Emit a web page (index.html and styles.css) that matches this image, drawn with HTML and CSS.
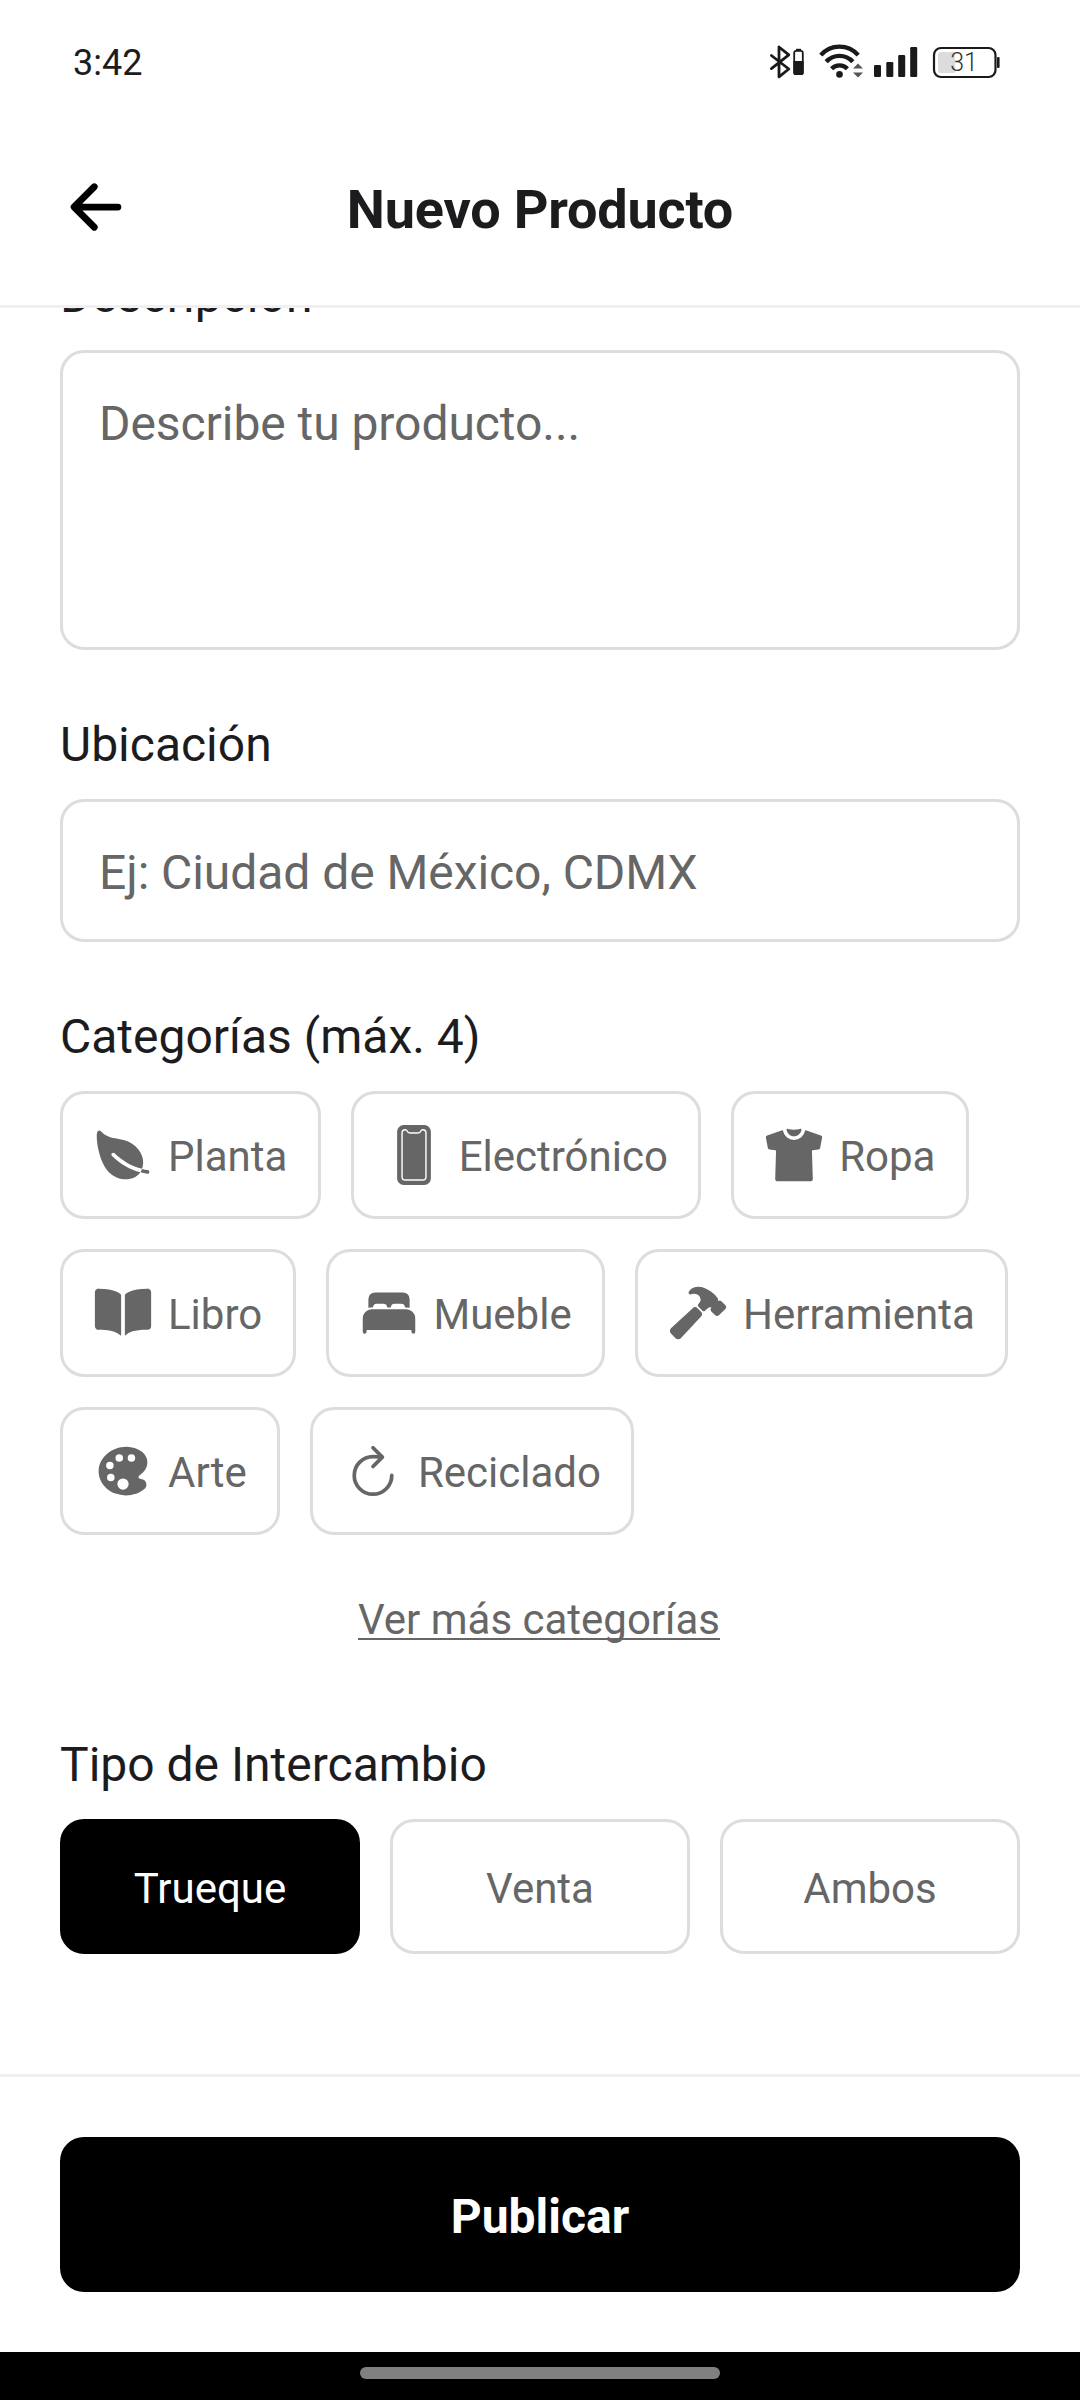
FILE: index.html
```html
<!DOCTYPE html>
<html lang="es">
<head>
<meta charset="utf-8">
<title>Nuevo Producto</title>
<link rel="stylesheet" href="styles.css">
</head>
<body>
<div class="screen">
  <div class="statusbar">
    <span class="clock">3:42</span>
    <svg class="status-icons" viewBox="0 0 300 70" width="300" height="70">
      <g fill="none" stroke="#1a1a1a" stroke-width="2.8" stroke-linejoin="round" stroke-linecap="round">
        <path d="M31.4 25.5L48.8 39L39 46.8V17L48.8 24.8L31.4 38.6"/>
      </g>
      <rect x="54.2" y="20.8" width="8.6" height="23.4" rx="2" fill="none" stroke="#1a1a1a" stroke-width="1.8"/>
      <rect x="56" y="18.8" width="5" height="2" fill="#1a1a1a"/>
      <path d="M53.4 31h10.2v12a2 2 0 0 1-2 2h-6.2a2 2 0 0 1-2-2z" fill="#1a1a1a"/>
      <g fill="none" stroke="#1a1a1a" stroke-width="4.3">
        <path d="M80.8 25.2a24.7 24.7 0 0 1 37.4 0"/>
        <path d="M86.2 31.8a17.8 17.8 0 0 1 26.6 0"/>
        <path d="M91.6 38.7a11 11 0 0 1 15.8 0"/>
      </g>
      <circle cx="99.5" cy="44.4" r="3.3" fill="#1a1a1a"/>
      <path d="M113 38.6l5-5 5 5zM113 42.4l5 5.2 5-5.2z" fill="#555"/>
      <g fill="#1a1a1a">
        <rect x="134" y="35" width="7" height="12" rx="1.2"/>
        <rect x="146.3" y="32" width="7" height="15" rx="1.2"/>
        <rect x="158.2" y="25" width="7" height="22" rx="1.2"/>
        <rect x="170.2" y="17" width="7" height="30" rx="1.2"/>
        <rect x="257" y="27" width="2.6" height="11" rx="1"/>
      </g>
      <path d="M201 22h14v21h-14a3 3 0 0 1-3-3V25a3 3 0 0 1 3-3z" fill="#dcdcdc"/>
      <rect x="194" y="18" width="61.5" height="29" rx="7" fill="none" stroke="#1a1a1a" stroke-width="2.2"/>
      <text class="battery-level" x="224" y="41" text-anchor="middle">31</text>
    </svg>
  </div>

  <header class="header">
    <svg class="back" viewBox="0 0 512 512" fill="none" stroke="#000" stroke-width="48" stroke-linecap="round" stroke-linejoin="round"><path d="M244 400L100 256l144-144M120 256h292"/></svg>
    <h1 class="title">Nuevo Producto</h1>
  </header>

  <main class="content">
    <div class="form">
      <section class="field">
        <div class="label">Descripción</div>
        <div class="input input-area">Describe tu producto...</div>
      </section>
      <section class="field">
        <div class="label">Ubicación</div>
        <div class="input">Ej: Ciudad de México, CDMX</div>
      </section>
      <section class="field">
        <div class="label">Categorías (máx. 4)</div>
        <div class="chips">
          <div class="chip"><svg class="icon" viewBox="0 0 512 512"><path d="M161.35 242a16 16 0 0122.62-.68c73.63 69.36 147.51 111.56 234.45 133.07 11.73-32 12.77-67.22 2.64-101.58-13.44-45.59-44.74-85.31-90.49-114.86-40.84-26.38-81.66-33.25-121.15-39.89-49.82-8.38-96.88-16.3-141.79-63.85-5-5.26-11.81-7.37-18.32-5.66-7.44 2-12.43 7.88-14.82 17.6-5.6 22.75-2 86.51 13.75 153.82 25.29 108.14 65.65 162.86 95.06 189.73 38 34.69 87.62 53.9 136.93 53.9a186 186 0 0027.77-2.04c41.71-6.32 76.43-27.27 96-57.75-89.49-23.28-165.94-67.55-242-139.16a16 16 0 01-.65-22.65zM467.43 384.19c-16.83-2.59-33.13-5.84-49-9.77a157.71 157.71 0 01-12.13 25.68c-.73 1.25-1.5 2.49-2.29 3.71a584.21 584.21 0 0058.56 12 16 16 0 104.87-31.62z"/></svg><span>Planta</span></div>
          <div class="chip"><svg class="icon" viewBox="0 0 512 512"><rect x="112" width="288" height="512" rx="56"/><path class="screen-line" d="M180 41q-26 0-26 28v372q0 28 28 28h148q28 0 28-28V69q0-28-26-28-14 0-17 9-6 18-26 18h-66q-20 0-26-18-3-9-17-9z"/></svg><span>Electrónico</span></div>
          <div class="chip"><svg class="icon" viewBox="0 0 512 512"><path d="M256 96c33.08 0 60.71-25.78 64-58 .3-3-3-6-6-6a13 13 0 00-4.74.9c-.2.08-21.1 8.1-53.26 8.1s-53.1-8-53.26-8.1a16.21 16.21 0 00-5.3-.9h-.06a5.69 5.69 0 00-5.38 6c3.35 32.16 31 58 64 58z"/><path d="M485.29 89.9L356 44.64a4 4 0 00-5.27 3.16 96 96 0 01-189.38 0 4 4 0 00-5.27-3.16L26.71 89.9A16 16 0 0016.28 108l16.63 88A16 16 0 0046.83 208.9l48.88 5.52a8 8 0 017.1 8.19l-7.33 240.9a16 16 0 009.1 14.94A17.49 17.49 0 00112 480h288a17.49 17.49 0 007.42-1.55 16 16 0 009.1-14.94l-7.33-240.9a8 8 0 017.1-8.19l48.88-5.52a16 16 0 0013.92-12.9l16.63-88a16 16 0 00-10.43-18.1z"/></svg><span>Ropa</span></div>
          <div class="chip"><svg class="icon" viewBox="0 0 512 512"><path d="M202.24 74C166.11 56.75 115.61 48.3 48 48a31.36 31.36 0 00-17.92 5.33A32 32 0 0016 79.9V366c0 19.34 13.76 33.93 32 33.93 71.07 0 142.36 6.64 185.06 47a4.11 4.11 0 006.94-3V106.82a15.89 15.89 0 00-5.46-12A143 143 0 00202.24 74zM481.92 53.3A31.33 31.33 0 00464 48c-67.61.3-118.11 8.71-154.24 26a143.31 143.31 0 00-32.31 20.78 15.93 15.93 0 00-5.45 12v337.13a3.93 3.93 0 006.68 2.81c25.67-25.5 70.72-46.82 185.36-46.81a32 32 0 0032-32v-288a32 32 0 00-14.12-26.61z"/></svg><span>Libro</span></div>
          <div class="chip"><svg class="icon" viewBox="0 0 512 512"><path d="M432 230.7a79.44 79.44 0 00-32-6.7H112a79.51 79.51 0 00-32 6.69A80.09 80.09 0 0032 304v112a16 16 0 0032 0v-8a8.1 8.1 0 018-8h368a8.1 8.1 0 018 8v8a16 16 0 0032 0V304a80.09 80.09 0 00-48-73.3zM376 80H136a56 56 0 00-56 56v72a4 4 0 005.11 3.84A95.5 95.5 0 01112 208h4.23a4 4 0 004-3.55A32 32 0 01152 176h56a32 32 0 0131.8 28.45 4 4 0 004 3.55h24.46a4 4 0 004-3.55A32 32 0 01304 176h56a32 32 0 0131.8 28.45 4 4 0 004 3.55H400a95.51 95.51 0 0126.89 3.85A4 4 0 00432 208v-72a56 56 0 00-56-56z"/></svg><span>Mueble</span></div>
          <div class="chip"><svg class="icon" viewBox="0 0 512 512"><path d="M280.16 242.79l-26.11-26.12a32 32 0 00-45.14-.12L27.38 384.08c-6.61 6.23-10.95 14.17-11.35 23.06a32.11 32.11 0 009.21 23.94l39 39.43a.46.46 0 00.07.07A32.29 32.29 0 0087 480h1.18c8.89-.33 17-4.64 23.32-11.26l168.68-180.69a32 32 0 00-.02-45.26zM490 190l-.31-.31-34.27-33.92a21.46 21.46 0 00-15.28-6.26 21.89 21.89 0 00-12.79 4.14c0-.43.06-.85.09-1.22.45-6.5 1.15-16.32-5.2-25.22a258 258 0 00-24.8-28.74.6.6 0 00-.08-.08c-13.32-13.12-42.31-37.83-86.72-55.94A139.55 139.55 0 00257.56 32C226 32 202 46.24 192.81 54.68a119.92 119.92 0 00-14.18 17.22 16 16 0 0018.65 24.34 74.45 74.45 0 018.58-2.63 63.46 63.46 0 0118.45-1.15c13.19 1.09 28.79 7.64 35.69 13.09 11.7 9.41 17.33 22.09 18.26 41.09.18 3.82-7.72 18.14-20 34.48a16 16 0 001.45 21l34.41 34.41a16 16 0 0022 .62c9.73-8.69 24.55-21.79 29.73-25 7.69-4.73 13.19-5.64 14.7-5.8a19.18 19.18 0 0111.29 2.38 1.24 1.24 0 01-.31.95l-1.82 1.73-.3.28a21.52 21.52 0 00.05 30.54l34.26 33.91a21.45 21.45 0 0015.28 6.25 21.7 21.7 0 0015.22-6.2l55.5-54.82c.19-.19.38-.39.56-.59A21.87 21.87 0 00490 190z"/></svg><span>Herramienta</span></div>
          <div class="chip"><svg class="icon" viewBox="0 0 512 512"><path d="M441 336.2l-.06-.05c-9.93-9.18-22.78-11.34-32.16-12.92l-.69-.12c-9.05-1.49-10.48-2.5-14.58-6.17-2.44-2.17-5.35-5.65-5.35-9.94s2.91-7.77 5.34-9.94l30.28-26.87c25.92-22.91 40.2-53.66 40.2-86.59s-14.25-63.68-40.2-86.6c-35.89-31.59-85-49-138.37-49C223.72 48 162 71.37 116 112.11c-43.87 38.77-68 90.71-68 146.24s24.16 107.47 68 146.23c21.75 19.24 47.49 34.18 76.52 44.42a266.17 266.17 0 0086.87 15h1.81c61 0 119.09-20.57 159.39-56.4 9.7-8.56 15.15-20.83 15.34-34.56.21-14.17-5.37-27.95-14.93-36.84zM112 208a32 32 0 1132 32 32 32 0 01-32-32zm40 135a32 32 0 1132-32 32 32 0 01-32 32zm40-199a32 32 0 1132 32 32 32 0 01-32-32zm64 271a48 48 0 1148-48 48 48 0 01-48 48zm72-239a32 32 0 1132-32 32 32 0 01-32 32z"/></svg><span>Arte</span></div>
          <div class="chip"><svg class="icon icon-line" viewBox="0 0 512 512"><path d="M320 146s24.36-12-64-12a160 160 0 10160 160"/><path d="M256 58l80 80-80 80"/></svg><span>Reciclado</span></div>
        </div>
        <a class="more">Ver más categorías</a>
      </section>
      <section class="field">
        <div class="label">Tipo de Intercambio</div>
        <div class="options">
          <div class="option option-active">Trueque</div>
          <div class="option">Venta</div>
          <div class="option">Ambos</div>
        </div>
      </section>
    </div>
  </main>

  <footer class="footer">
    <div class="publish">Publicar</div>
  </footer>
  <div class="navbar"><div class="pill"></div></div>
</div>
</body>
</html>
```
FILE: styles.css
```css
* { box-sizing: border-box; }

body {
  margin: 0;
  font-family: Roboto, "Noto Sans", sans-serif;
  color: #1c1c1e;
  background: #fff;
}

.screen {
  display: flex;
  flex-direction: column;
  width: 1080px;
  height: 2400px;
  overflow: hidden;
}

.statusbar {
  flex: none;
  display: flex;
  justify-content: space-between;
  height: 108px;
  padding: 30px 40px 0 73px;
}
.clock { padding-top: 12px; font-size: 36px; line-height: 42px; }
.status-icons { display: block; }
.battery-level { font-size: 25px; font-weight: 300; fill: #333; }

.header {
  flex: none;
  display: grid;
  grid-template-columns: 72px 1fr 72px;
  align-items: center;
  height: 200px;
  padding: 0 60px;
  border-bottom: 3px solid #f0f0f0;
}
.back { display: block; width: 72px; height: 72px; }
.title {
  margin: 0;
  padding-top: 7px;
  font-size: 54px;
  line-height: 64px;
  font-weight: 700;
  letter-spacing: -0.2px;
  text-align: center;
}

.content { flex: 1; min-height: 0; overflow: hidden; }
.form {
  display: flex;
  flex-direction: column;
  gap: 66px;
  margin-top: -41px;
  padding: 0 60px;
}
.label { height: 83px; font-size: 48px; line-height: 58px; }

.input {
  height: 143px;
  padding: 41px 36px;
  border: 3px solid #ddd;
  border-radius: 24px;
  font-size: 48px;
  line-height: 60px;
  letter-spacing: -0.06px;
  color: #666;
}
.input-area { height: 300px; }

.chips { display: flex; flex-wrap: wrap; gap: 30px; }
.chip {
  display: flex;
  align-items: center;
  gap: 15px;
  height: 128px;
  padding: 0 30.3px 0 30px;
  border: 3px solid #ddd;
  border-radius: 24px;
  font-size: 42px;
  line-height: 50px;
  color: #666;
}
.chip span { padding-top: 3px; }
.icon { flex: none; width: 60px; height: 60px; fill: #666; }
.screen-line { fill: none; stroke: #fff; stroke-width: 12; }
.icon-line { fill: none; stroke: #666; stroke-width: 32; stroke-linecap: round; stroke-linejoin: round; }

.more {
  display: block;
  margin-top: 60px;
  padding: 0 2px 25px 0;
  font-size: 42px;
  line-height: 50px;
  text-align: center;
  color: #666;
  text-decoration: underline;
  text-decoration-thickness: 2px;
  text-decoration-skip-ink: none;
  text-underline-offset: 4px;
}

.options { display: grid; grid-template-columns: repeat(3, 1fr); gap: 30px; }
.option {
  height: 135px;
  border: 3px solid #ddd;
  border-radius: 24px;
  font-size: 42px;
  line-height: 133px;
  text-align: center;
  color: #666;
}
.option-active { background: #000; border-color: #000; color: #fff; }

.footer {
  flex: none;
  height: 278px;
  padding: 60px 60px 0;
  border-top: 3px solid #f0f0f0;
}
.publish {
  height: 155px;
  border-radius: 24px;
  background: #000;
  color: #fff;
  font-size: 48px;
  font-weight: 700;
  line-height: 159px;
  text-align: center;
}

.navbar {
  flex: none;
  display: flex;
  justify-content: center;
  height: 48px;
  padding-top: 15px;
  background: #000;
}
.pill { width: 360px; height: 12px; border-radius: 6px; background: #808080; }
```
